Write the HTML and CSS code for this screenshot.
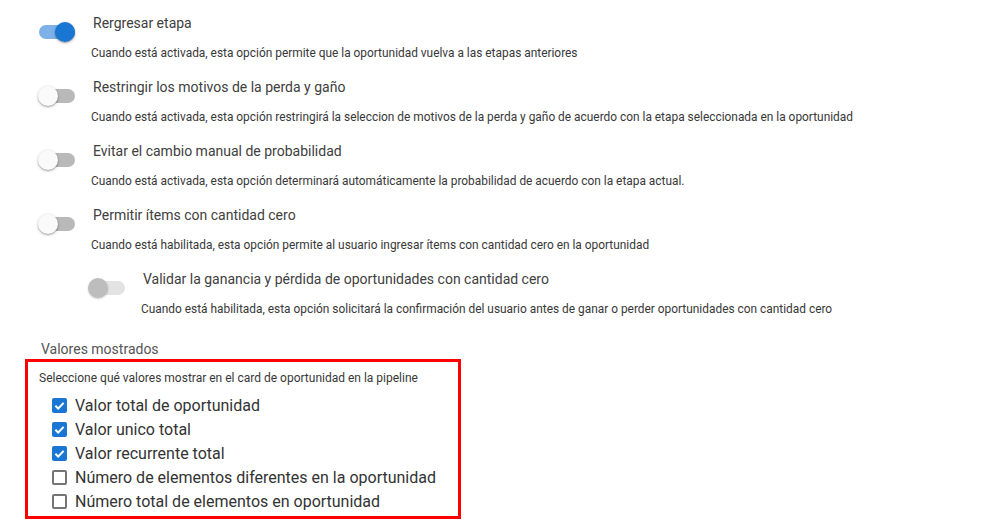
FILE: index.html
```html
<!DOCTYPE html>
<html lang="es">
<head>
    <meta charset="UTF-8">
    <meta name="viewport" content="width=device-width, initial-scale=1.0">
    <title>Configuración de pipeline</title>
    <link rel="stylesheet" href="styles.css">
</head>
<body>
    <div class="settings">
        <div class="option">
            <span class="switch on"><span class="track"></span><span class="thumb"></span></span>
            <div class="option-text">
                <div class="option-title">Rergresar etapa</div>
                <div class="option-desc">Cuando está activada, esta opción permite que la oportunidad vuelva a las etapas anteriores</div>
            </div>
        </div>

        <div class="option">
            <span class="switch"><span class="track"></span><span class="thumb"></span></span>
            <div class="option-text">
                <div class="option-title">Restringir los motivos de la perda y gaño</div>
                <div class="option-desc">Cuando está activada, esta opción restringirá la seleccion de motivos de la perda y gaño de acuerdo con la etapa seleccionada en la oportunidad</div>
            </div>
        </div>

        <div class="option">
            <span class="switch"><span class="track"></span><span class="thumb"></span></span>
            <div class="option-text">
                <div class="option-title">Evitar el cambio manual de probabilidad</div>
                <div class="option-desc">Cuando está activada, esta opción determinará automáticamente la probabilidad de acuerdo con la etapa actual.</div>
            </div>
        </div>

        <div class="option">
            <span class="switch"><span class="track"></span><span class="thumb"></span></span>
            <div class="option-text">
                <div class="option-title">Permitir ítems con cantidad cero</div>
                <div class="option-desc">Cuando está habilitada, esta opción permite al usuario ingresar ítems con cantidad cero en la oportunidad</div>
            </div>
        </div>

        <div class="option nested">
            <span class="switch disabled"><span class="track"></span><span class="thumb"></span></span>
            <div class="option-text">
                <div class="option-title">Validar la ganancia y pérdida de oportunidades con cantidad cero</div>
                <div class="option-desc">Cuando está habilitada, esta opción solicitará la confirmación del usuario antes de ganar o perder oportunidades con cantidad cero</div>
            </div>
        </div>

        <div class="section-label">Valores mostrados</div>

        <div class="values-box">
            <div class="values-hint">Seleccione qué valores mostrar en el card de oportunidad en la pipeline</div>
            <ul class="check-list">
                <li class="check-item">
                    <span class="checkbox checked"><svg viewBox="0 0 16 16" width="16" height="16"><path d="M3.6 8.2l3 3 5.8-6" fill="none" stroke="#fff" stroke-width="2.2"/></svg></span>
                    Valor total de oportunidad
                </li>
                <li class="check-item">
                    <span class="checkbox checked"><svg viewBox="0 0 16 16" width="16" height="16"><path d="M3.6 8.2l3 3 5.8-6" fill="none" stroke="#fff" stroke-width="2.2"/></svg></span>
                    Valor unico total
                </li>
                <li class="check-item">
                    <span class="checkbox checked"><svg viewBox="0 0 16 16" width="16" height="16"><path d="M3.6 8.2l3 3 5.8-6" fill="none" stroke="#fff" stroke-width="2.2"/></svg></span>
                    Valor recurrente total
                </li>
                <li class="check-item">
                    <span class="checkbox"></span>
                    Número de elementos diferentes en la oportunidad
                </li>
                <li class="check-item">
                    <span class="checkbox"></span>
                    Número total de elementos en oportunidad
                </li>
            </ul>
        </div>
    </div>
</body>
</html>
```

FILE: styles.css
```css
body {
    margin: 0;
    font-family: Roboto, "Liberation Sans", sans-serif;
    background: #fff;
    color: #3c3c3c;
}

.settings {
    padding: 13px 0 0 38px;
}

.option {
    display: flex;
    align-items: flex-start;
    margin-bottom: 16px;
}

.option.nested {
    margin-left: 50px;
}

.switch {
    position: relative;
    flex: none;
    width: 37px;
    height: 20px;
    margin-top: 9px;
    margin-right: 16px;
}

.switch .track {
    position: absolute;
    left: 1px;
    right: 0;
    top: 3px;
    height: 14px;
    border-radius: 7px;
    background: #b9b9b9;
}

.switch .thumb {
    position: absolute;
    top: 0;
    left: 0;
    width: 20px;
    height: 20px;
    border-radius: 50%;
    background: #fafafa;
    box-shadow: 0 1px 3px rgba(0, 0, 0, 0.3), 0 1px 1px rgba(0, 0, 0, 0.14);
}

.switch.on .track {
    background: #7eb1e9;
}

.switch.on .thumb {
    left: auto;
    right: 0;
    background: #1976d2;
}

.switch.disabled .track {
    background: #e3e3e3;
}

.switch.disabled .thumb {
    background: #bdbdbd;
    box-shadow: 0 1px 2px rgba(0, 0, 0, 0.2);
}

.option-title {
    font-size: 14px;
    line-height: 20px;
    padding-left: 2px;
    color: #404040;
}

.option-desc {
    margin-top: 12px;
    font-size: 11.9px;
    line-height: 16px;
    color: #383838;
}

.section-label {
    margin: 22px 0 0 3px;
    font-size: 14px;
    line-height: 20px;
    color: #555;
}

.values-box {
    width: 419px;
    margin: 0 0 0 -13px;
    border: 3px solid #ff0000;
    padding: 8px 0 3px 11px;
}

.values-hint {
    font-size: 12px;
    line-height: 16px;
    color: #383838;
}

.check-list {
    list-style: none;
    margin: 7px 0 0;
    padding: 0 0 0 13px;
}

.check-item {
    display: flex;
    align-items: center;
    height: 24px;
    font-size: 16px;
    color: #333;
}

.checkbox {
    flex: none;
    box-sizing: border-box;
    width: 15px;
    height: 15px;
    margin-right: 8px;
    border: 2px solid #757575;
    border-radius: 2px;
}

.checkbox.checked {
    border: none;
    background: #1976d2;
}

.checkbox.checked svg {
    display: block;
    width: 15px;
    height: 15px;
}
```
